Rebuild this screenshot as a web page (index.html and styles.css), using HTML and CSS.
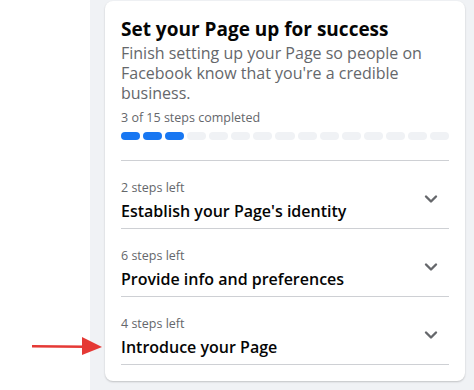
FILE: index.html
```html
<!DOCTYPE html>
<html lang="en">
<head>
  <meta charset="UTF-8" />
  <title>Page setup</title>
  <link rel="stylesheet" href="styles.css">
</head>
<body>
  <div class="page">
    <div class="gutter"></div>
    <main class="panel">
      <section class="card">
        <h2 class="card-title">Set your Page up for success</h2>
        <p class="card-desc">Finish setting up your Page so people on Facebook know that you're a credible business.</p>
        <div class="progress-label">3 of 15 steps completed</div>
        <div class="progress" id="progress"></div>

        <div class="steps">
          <div class="step">
            <div class="step-text">
              <div class="step-left">2 steps left</div>
              <div class="step-name">Establish your Page's identity</div>
            </div>
            <svg class="chevron" viewBox="0 0 16 16"><path d="M3 5.5 L8 10.5 L13 5.5" /></svg>
          </div>
          <div class="step">
            <div class="step-text">
              <div class="step-left">6 steps left</div>
              <div class="step-name">Provide info and preferences</div>
            </div>
            <svg class="chevron" viewBox="0 0 16 16"><path d="M3 5.5 L8 10.5 L13 5.5" /></svg>
          </div>
          <div class="step">
            <div class="step-text">
              <div class="step-left">4 steps left</div>
              <div class="step-name">Introduce your Page</div>
            </div>
            <svg class="chevron" viewBox="0 0 16 16"><path d="M3 5.5 L8 10.5 L13 5.5" /></svg>
          </div>
        </div>
      </section>
    </main>
  </div>

  <svg class="pointer" viewBox="0 0 70 20">
    <path d="M0 9 L54 9.5 L54 12 L0 11.5 Z" />
    <path d="M50 1 L70 11 L50 19 Z" />
  </svg>

  <script>
    const progress = document.getElementById('progress');
    const total = 15;
    const done = 3;
    for (let i = 0; i < total; i++) {
      progress.innerHTML += `<span class="seg${i < done ? ' done' : ''}"></span>`;
    }
  </script>
</body>
</html>
```

FILE: styles.css
```css
body {
  margin: 0;
  font-family: "Open Sans", "Noto Sans", Arial, sans-serif;
  background-color: #fff;
  color: #1c1e21;
}

.page {
  display: flex;
  height: 390px;
  overflow: hidden;
}

.gutter {
  width: 90px;
  flex-shrink: 0;
}

.panel {
  flex: 1;
  background-color: #f0f2f5;
  padding: 1px 9px 0 15px;
}

.card {
  background-color: #fff;
  border-radius: 8px;
  box-shadow: 0 1px 2px rgba(0,0,0,0.2);
  padding: 16px 16px 16px;
  height: 380px;
  box-sizing: border-box;
}

.card-title {
  margin: 0;
  font-size: 19px;
  line-height: 24px;
  font-weight: 700;
  color: #050505;
}

.card-desc {
  margin: 2px 0 0;
  font-size: 16px;
  line-height: 20px;
  color: #65676b;
}

.progress-label {
  margin-top: 7px;
  font-size: 12.5px;
  line-height: 16px;
  color: #65676b;
}

.progress {
  display: flex;
  gap: 3px;
  margin-top: 6px;
  padding-bottom: 20px;
  border-bottom: 1px solid #ced0d4;
}

.seg {
  flex: 1;
  height: 8px;
  border-radius: 4px;
  background-color: #f0f2f5;
}

.seg.done {
  background-color: #1877f2;
}

.step {
  display: flex;
  align-items: flex-start;
  justify-content: space-between;
  height: 67px;
  padding-top: 19px;
  box-sizing: border-box;
  height: 68px;
  border-bottom: 1px solid #ced0d4;
}

.step-left {
  font-size: 12.5px;
  line-height: 16px;
  color: #65676b;
}

.step-name {
  margin-top: 5px;
  font-size: 16px;
  line-height: 20px;
  font-weight: 600;
  color: #050505;
}

.chevron {
  width: 16px;
  height: 16px;
  margin: 11px 10px 0 0;
  fill: none;
  stroke: #65676b;
  stroke-width: 2.4;
  stroke-linecap: round;
  stroke-linejoin: round;
}

.pointer {
  position: absolute;
  left: 32px;
  top: 336px;
  width: 70px;
  height: 20px;
  fill: #e53935;
}
```
